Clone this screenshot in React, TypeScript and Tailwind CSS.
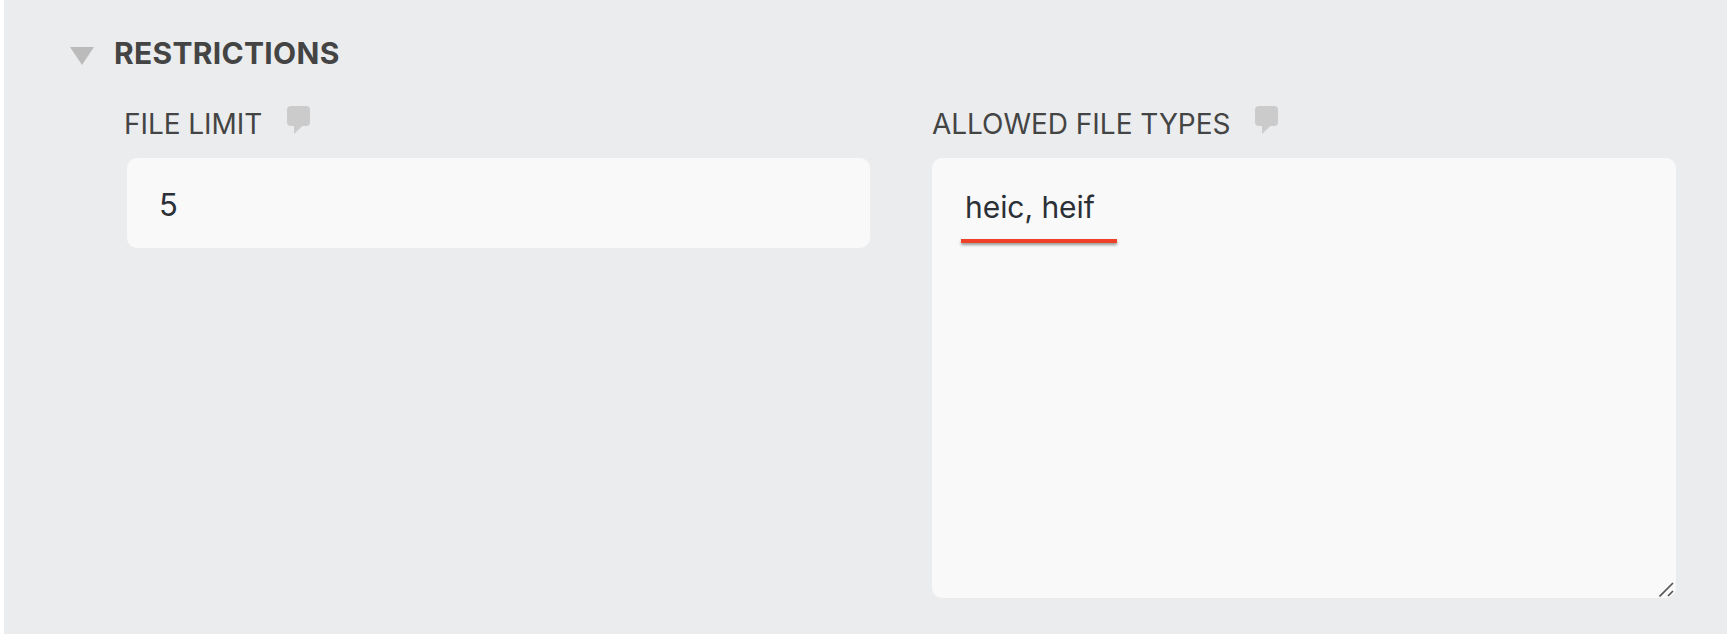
import { FC, ReactNode } from 'react'

const CommentIcon: FC = () => (
  <svg className="h-7 w-[23px] shrink-0" viewBox="0 0 23 28" fill="#cbcbcb">
    <path d="M4 0h15a4 4 0 0 1 4 4v12a4 4 0 0 1-4 4h-3.5L7 28v-8H4a4 4 0 0 1-4-4V4a4 4 0 0 1 4-4z" />
  </svg>
)

interface FieldProps {
  label: ReactNode
  children: ReactNode
}

const Field: FC<FieldProps> = ({ label, children }) => (
  <div className="w-[744px]">
    {label}
    {children}
  </div>
)

export default function App() {
  return (
    <div className="h-[634px] w-[1727px] overflow-hidden border-l-4 border-white bg-[#ebecee] font-['Inter',sans-serif] text-[#444444]">
      {/* Section heading */}
      <div className="flex h-[106px] items-start pt-[35px] pl-[66px]">
        <svg className="mt-3 h-[18px] w-6" viewBox="0 0 24 18" fill="#bbbbbb">
          <path d="M0 0h24L12 18z" />
        </svg>
        <h2 className="ml-5 text-[30px] leading-9 font-bold tracking-[0.3px]">RESTRICTIONS</h2>
      </div>

      <div className="flex gap-[61px] pl-[123px]">
        <Field
          label={
            <div className="-ml-[3px] flex h-[52px] items-start">
              <label htmlFor="limit" className="mt-px w-[163px] text-[28px] leading-[35px] tracking-[-0.05px]">FILE LIMIT</label>
              <CommentIcon />
            </div>
          }
        >
          <div id="limit" className="flex h-[90px] w-[743px] items-center rounded-[10px] bg-[#f9f9f9] px-8 pt-[3px] text-[31px] leading-9 text-[#2b3036]">
            5
          </div>
        </Field>

        <Field
          label={
            <div className="flex h-[52px] items-start">
              <label htmlFor="types" className="mt-px w-[323px] text-[28px] leading-[35px] tracking-[-0.03px]">ALLOWED FILE TYPES</label>
              <CommentIcon />
            </div>
          }
        >
          <div id="types" className="relative h-[440px] rounded-[10px] bg-[#f9f9f9] px-[33px] pt-[31px] text-[30px] leading-9 text-[#2b3036]">
            <span className="tracking-[-0.05px]">heic, heif</span>
            <div className="mt-3.5 -ml-1 h-1 w-[156px] bg-[#ef4028] shadow-[0_2px_3px_rgba(0,0,0,0.4)]" />
            {/* Resize grip */}
            <svg className="absolute right-0.5 bottom-px h-[15px] w-[15px]" viewBox="0 0 15 15" fill="none" stroke="#555555" strokeWidth="1.7">
              <path d="M0.5 14.5L14 1M9 14l5-5" />
            </svg>
          </div>
        </Field>
      </div>
    </div>
  )
}
